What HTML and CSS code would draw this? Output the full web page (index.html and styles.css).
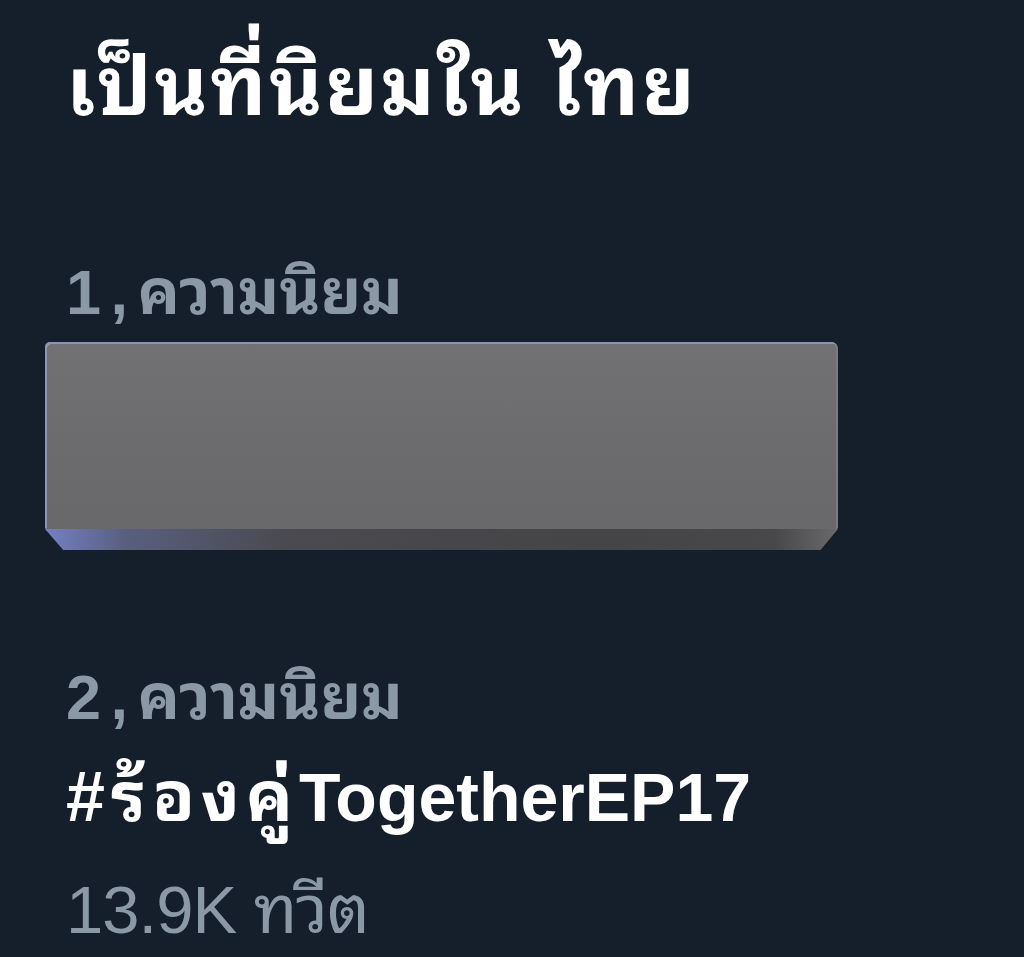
FILE: index.html
```html
<!DOCTYPE html>
<html lang="th">
<head>
<meta charset="utf-8">
<link rel="stylesheet" href="styles.css">
</head>
<body>
<main class="panel">
  <h1 class="title">เป็นที่นิยมใน ไทย</h1>
  <section class="trend first">
    <div class="meta">1 , ความนิยม</div>
    <div class="block">
      <div class="face"></div>
      <div class="bevel"></div>
    </div>
  </section>
  <section class="trend second">
    <div class="meta">2 , ความนิยม</div>
    <div class="tag"><span class="tag-th">#ร้องคู่</span>TogetherEP17</div>
    <div class="count">13.9K ทวีต</div>
  </section>
</main>
</body>
</html>
```

FILE: styles.css
```css
html, body {
  margin: 0;
  padding: 0;
  background: #151e2b;
}
body {
  width: 1024px;
  height: 957px;
  overflow: hidden;
  font-family: "Liberation Sans", "Noto Sans Thai Looped", sans-serif;
}
.panel {
  padding: 27px 0 0 66px;
}
.title {
  margin: 0;
  font-size: 82px;
  font-weight: 700;
  line-height: 120px;
  letter-spacing: 2.5px;
  color: #ffffff;
}
.trend .meta {
  font-size: 63px;
  font-weight: 700;
  color: #8b98a5;
  line-height: 80px;
  word-spacing: -8px;
}
.first {
  margin-top: 105px;
}
.block {
  margin: 10px 0 0 -21px;
  width: 793px;
}
.face {
  height: 187px;
  border-radius: 5px 7px 2px 2px;
  background: linear-gradient(180deg, #727274 0%, #6c6c6e 50%, #69696b 100%);
  box-shadow: inset 2px 2px 0 #9095ae, inset -2px 0 0 #7c7c7e;
}
.bevel {
  height: 21px;
  background: linear-gradient(90deg, #7480c4 0%, #5a5f80 10%, #4a4a50 30%, #454547 70%, #48484a 92%, #6a6a6c 100%);
  clip-path: polygon(0 0, 100% 0, 97.8% 100%, 2.3% 100%);
}
.second {
  margin-top: 107px;
}
.tag {
  margin-top: 10px;
  font-size: 68px;
  font-weight: 700;
  color: #ffffff;
  line-height: 100px;
}
.tag-th {
  font-size: 70px;
  letter-spacing: 6px;
}
.count {
  margin-top: 8px;
  font-size: 67px;
  font-weight: 400;
  color: #8b98a5;
  line-height: 110px;
  letter-spacing: -1px;
}
```
